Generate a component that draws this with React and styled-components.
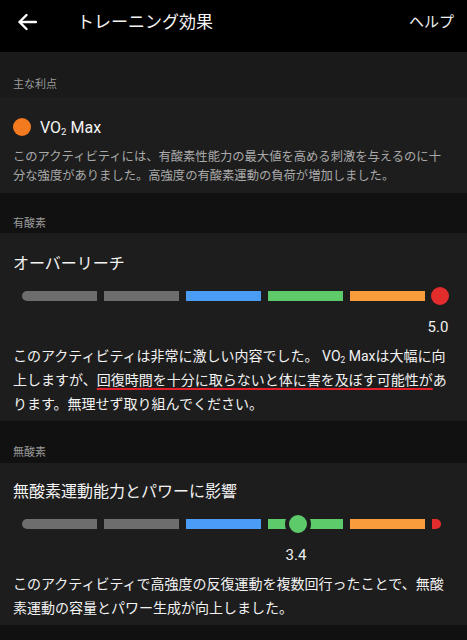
import React from "react";
import styled, { createGlobalStyle } from "styled-components";

const GlobalStyle = createGlobalStyle`
	body {
		margin: 0;
		background: #101010;
		font-family: Roboto, "Noto Sans CJK JP", sans-serif;
		color: #f2f2f2;
	}
`;

const SEG = 75;
const STEP = 82;
const BAR_W = 418;
const CARD_BG = "#1d1d1d";

const Page = styled.div`
	width: 467px;
	min-height: 640px;
	background: #101010;
`;
const Header = styled.header`
	display: flex;
	align-items: center;
	height: 40px;
	padding: 0 13px 12px 17px;
	background: #000;
`;
const Back = styled.div`
	display: flex;
	width: 20px;
	margin-top: 3px;
`;
const Title = styled.h1`
	flex: 1;
	margin: 0 0 0 40px;
	font-size: 17px;
	font-weight: 400;
	color: #f4f4f4;
`;
const Help = styled.span`
	font-size: 15px;
	color: #eee;
`;
const Label = styled.div`
	display: flex;
	align-items: flex-end;
	height: ${(p) => p.h}px;
	padding: 0 13px ${(p) => p.pb}px;
	box-sizing: border-box;
	background: ${(p) => p.bg || "#111"};
	font-size: 11px;
	line-height: 16px;
	color: #9a9a9a;
`;
const Card = styled.section`
	background: ${CARD_BG};
	padding: ${(p) => p.pad || "18px 14px 5px 13px"};
`;
const Head = styled.div`
	display: flex;
	align-items: center;
	gap: 9px;
	height: 24px;
`;
const Dot = styled.span`
	width: 18px;
	height: 18px;
	border-radius: 50%;
	background: #f47a1f;
`;
const HeadText = styled.span`
	font-size: 16px;
	color: #f4f4f4;
`;
const Sub = styled.sub`
	font-size: 0.6em;
	vertical-align: -0.25em;
	line-height: 0;
`;
const Desc = styled.p`
	margin: 9px 0 0;
	padding-right: 2px;
	font-size: 12.3px;
	line-height: 19px;
	color: #a9a9a9;
`;
const CardTitle = styled.h2`
	margin: 0;
	font-size: 16px;
	line-height: 26px;
	font-weight: 400;
	color: #f4f4f4;
`;
const BarWrap = styled.div`
	position: relative;
	display: flex;
	align-items: center;
	gap: 7px;
	width: ${BAR_W}px;
	height: 20px;
	margin: 9px 0 0 9px;
`;
const Seg = styled.span`
	flex: 0 0 ${(p) => p.w || SEG}px;
	height: 10px;
	background: ${(p) => p.c};
	border-radius: ${(p) => p.r || "0"};
`;
const Marker = styled.span`
	position: absolute;
	top: 50%;
	width: 18px;
	height: 18px;
	border: 4px solid ${CARD_BG};
	border-radius: 50%;
	background: ${(p) => p.c};
	transform: translate(-50%, -50%);
`;
const ValueRow = styled.div`
	position: relative;
	height: 20px;
	margin: 11px 0 0 9px;
	width: ${BAR_W}px;
`;
const Value = styled.span`
	position: absolute;
	top: 0;
	transform: translateX(-60%);
	font-size: 15px;
	line-height: 20px;
	color: #f0f0f0;
`;
const Body = styled.p`
	margin: 7px 0 0;
	font-size: 14px;
	line-height: 24px;
	color: #f2f2f2;
`;
const Mark = styled.span`
	text-decoration: underline;
	text-decoration-color: #e3202a;
	text-decoration-thickness: 2px;
	text-underline-offset: 3px;
`;

const segments = [
	{ c: "#6d6d6d", r: "5px 0 0 5px" },
	{ c: "#6d6d6d" },
	{ c: "#4a9cf5" },
	{ c: "#5ecb6b" },
	{ c: "#f99c3c" },
	{ c: "#e32c2c", w: 9, r: "0 5px 5px 0" },
];

function markerPos(v) {
	if (v >= 5) return BAR_W;
	return Math.floor(v) * STEP + (v % 1) * SEG;
}

function Scale({ value }) {
	const idx = Math.min(Math.floor(value), 5);
	const pos = markerPos(value);
	return (
		<>
			<BarWrap>
				{segments.map((s, i) => (
					<Seg key={i} c={s.c} w={s.w} r={s.r} />
				))}
				<Marker c={segments[idx].c} style={{ left: pos }} />
			</BarWrap>
			<ValueRow>
				<Value style={{ left: pos }}>{value.toFixed(1)}</Value>
			</ValueRow>
		</>
	);
}

export default function App() {
	return (
		<Page>
			<GlobalStyle />
			<Header>
				<Back>
					<svg width="20" height="18" viewBox="0 0 20 18" fill="none">
						<path
							d="M19 9H2.5M9.5 2L2.5 9l7 7"
							stroke="#fff"
							strokeWidth="2.4"
							strokeLinecap="round"
							strokeLinejoin="round"
						/>
					</svg>
				</Back>
				<Title>トレーニング効果</Title>
				<Help>ヘルプ</Help>
			</Header>

			<Label h={45} pb={4} bg="#1a1a1a">主な利点</Label>
			<Card pad="18px 14px 7px 13px">
				<Head>
					<Dot />
					<HeadText>
						VO<Sub>2</Sub> Max
					</HeadText>
				</Head>
				<Desc>
					このアクティビティには、有酸素性能力の最大値を高める刺激を与えるのに十分な強度がありました。高強度の有酸素運動の負荷が増加しました。
				</Desc>
			</Card>

			<Label h={40} pb={1}>有酸素</Label>
			<Card>
				<CardTitle>オーバーリーチ</CardTitle>
				<Scale value={5.0} />
				<Body>
					このアクティビティは非常に激しい内容でした。 VO<Sub>2</Sub> Maxは大幅に向上しますが、
					<Mark>回復時間を十分に取らないと体に害を及ぼす可能性が</Mark>
					あります。無理せず取り組んでください。
				</Body>
			</Card>

			<Label h={42} pb={2}>無酸素</Label>
			<Card pad="16px 14px 5px 13px">
				<CardTitle>無酸素運動能力とパワーに影響</CardTitle>
				<Scale value={3.4} />
				<Body>
					このアクティビティで高強度の反復運動を複数回行ったことで、無酸素運動の容量とパワー生成が向上しました。
				</Body>
			</Card>
		</Page>
	);
}
